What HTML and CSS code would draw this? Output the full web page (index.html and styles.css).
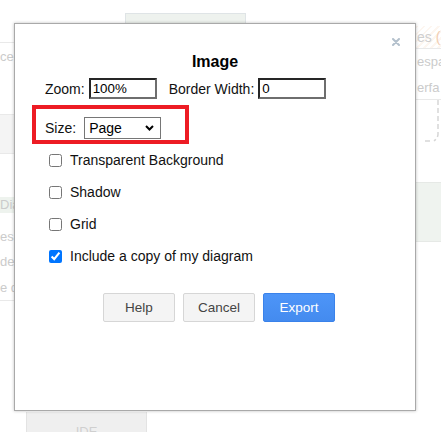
FILE: index.html
```html
<!DOCTYPE html>
<html>
<head>
<meta charset="utf-8">
<link rel="stylesheet" href="styles.css">
</head>
<body>
<div class="app">
  <div class="side left">
    <div class="blank h43 line-b"></div>
    <div class="t h28">ce</div>
    <div class="blank h43"></div>
    <div class="gray-band"></div>
    <div class="blank h43"></div>
    <div class="t green-band">Dia</div>
    <div class="blank h12"></div>
    <div class="t h24">es i</div>
    <div class="t h26">de</div>
    <div class="t h26 line-b">e d</div>
  </div>
  <div class="main">
    <div class="tab"></div>
    <div class="ide">IDE</div>
  </div>
  <div class="side right">
    <div class="blank h26"></div>
    <div class="hatch line-b">es <span class="or">(</span></div>
    <div class="r h26">espa</div>
    <div class="r h25 line-b">erfa</div>
    <div class="dash">
      <svg width="25" height="45" viewBox="0 0 25 45"><path d="M22 0 V34 Q22 38 18 41 M14 41 H8" fill="none" stroke="#d6d6d6" stroke-width="1.5" stroke-dasharray="5 3"/></svg>
    </div>
    <div class="blank h37"></div>
    <div class="green-block"></div>
  </div>
</div>

<div class="dialog">
  <button class="close" aria-label="Close">
    <svg width="8" height="8" viewBox="0 0 8 8"><path d="M1 1 L7 7 M7 1 L1 7" stroke="#b3c0cc" stroke-width="2" stroke-linecap="round"/></svg>
  </button>
  <h2 class="title">Image</h2>
  <div class="zoom-row">
    <label class="lbl">Zoom:</label>
    <input class="txt" type="text" value="100%">
    <label class="lbl bw">Border Width:</label>
    <input class="txt bw-input" type="text" value="0">
  </div>
  <div class="size-box">
    <label class="lbl">Size:</label>
    <div class="select-wrap">
      <select class="sel"><option>Page</option><option>Selection Only</option></select>
      <svg class="chev" width="9" height="6" viewBox="0 0 9 6"><path d="M1 1 L4.5 4.5 L8 1" fill="none" stroke="#000" stroke-width="2"/></svg>
    </div>
  </div>
  <label class="check"><input type="checkbox" class="cb"><span>Transparent Background</span></label>
  <label class="check"><input type="checkbox" class="cb"><span>Shadow</span></label>
  <label class="check"><input type="checkbox" class="cb"><span>Grid</span></label>
  <label class="check"><input type="checkbox" class="cb" checked><span>Include a copy of my diagram</span></label>
  <div class="buttons">
    <button class="btn">Help</button>
    <button class="btn">Cancel</button>
    <button class="btn primary">Export</button>
  </div>
</div>
</body>
</html>
```

FILE: styles.css
```css
* { box-sizing: border-box; }
html, body { margin: 0; padding: 0; }
body {
  width: 441px;
  height: 432px;
  overflow: hidden;
  position: relative;
  background: #fff;
  font-family: "Liberation Sans", Arial, sans-serif;
}

/* faded background app */
.app { display: flex; height: 432px; }
.side { flex: none; display: flex; flex-direction: column; font-size: 13px; color: #cbcbcb; }
.left { width: 26px; }
.right { width: 25px; }
.main { flex: 1; display: flex; flex-direction: column; justify-content: space-between; }
.blank { flex: none; }
.h12 { height: 12px; }
.h24 { height: 24px; line-height: 24px; }
.h25 { height: 25px; line-height: 25px; }
.h26 { height: 26px; line-height: 26px; }
.h28 { height: 28px; line-height: 28px; }
.h37 { height: 37px; }
.h43 { height: 43px; }
.line-b { border-bottom: 1px solid #e9e9e9; }
.t {
  white-space: nowrap;
  flex: none;
}
.gray-band {
  height: 40px;
  background: #f4f4f4;
  border-top: 1px solid #e9e9e9;
  border-bottom: 1px solid #e9e9e9;
  flex: none;
}
.green-band {
  height: 16px;
  line-height: 16px;
  background: #eef3ee;
}
.r {
  white-space: nowrap;
  padding-left: 1px;
  flex: none;
}
.hatch {
  height: 23px;
  line-height: 22px;
  white-space: nowrap;
  padding-left: 1px;
  color: #cfcfcf;
  font-size: 14px;
  background: repeating-linear-gradient(135deg, #fdf6f0 0 2px, #ffffff 2px 5px);
  flex: none;
}
.or { color: #f2cdb0; }
.dash { height: 45px; flex: none; }
.dash svg { display: block; }
.green-block {
  height: 60px;
  background: #eff3ef;
  border-top: 1px solid #e6e9e6;
  border-bottom: 1px solid #e6e9e6;
  flex: none;
}
.tab {
  margin: 13px 0 0 99px;
  width: 121px;
  height: 20px;
  background: #eef2ee;
  border: 1px solid #dfe4e6;
}
.ide {
  width: 121px;
  height: 20px;
  background: #efefef;
  border-left: 1px solid #e3e3e3;
  border-right: 1px solid #e3e3e3;
  padding-top: 12px;
  line-height: 16px;
  font-size: 13px;
  color: #cfcfcf;
  text-align: center;
  overflow: hidden;
}

/* dialog */
.dialog {
  position: absolute;
  left: 14px;
  top: 23px;
  width: 402px;
  height: 388px;
  background: #fff;
  border: 1px solid #a9a9a9;
  box-shadow: 0 0 3px rgba(0, 0, 0, 0.25);
  padding-top: 28px;
  color: #111;
}
.close {
  position: absolute;
  top: 14px;
  right: 15px;
  width: 8px;
  height: 8px;
  padding: 0;
  margin: 0;
  border: 0;
  background: none;
  display: block;
}
.close svg { display: block; }
.title {
  margin: 0;
  font-size: 16px;
  line-height: 19px;
  font-weight: bold;
  text-align: center;
  color: #000;
}
.zoom-row {
  margin-top: 7px;
  padding-left: 30px;
  display: flex;
  align-items: center;
  height: 21px;
}
.lbl { font-size: 14px; color: #111; }
.txt {
  width: 68px;
  height: 21px;
  margin: 0 0 0 4px;
  padding: 0 2px;
  border: 2px solid;
  border-color: #262626 #6e6e6e #6e6e6e #262626;
  font-family: "Liberation Sans", Arial, sans-serif;
  font-size: 13.33px;
  color: #000;
  outline: none;
}
.bw { margin-left: 12px; }
.bw-input { margin-left: 4px; }
.size-box {
  margin: 6px 0 0 17px;
  width: 157px;
  height: 39px;
  border: 4px solid #ed1c24;
  padding: 6px 0 0 9px;
  display: flex;
  align-items: center;
  align-self: flex-start;
}
.size-box .lbl { height: 22px; line-height: 22px; }
.select-wrap {
  position: relative;
  margin-left: 8px;
  width: 77px;
  height: 22px;
}
.sel {
  appearance: none;
  -webkit-appearance: none;
  width: 77px;
  height: 22px;
  margin: 0;
  padding: 0 0 0 4px;
  border: 1px solid #767676;
  border-radius: 0;
  background: #fff;
  font-family: "Liberation Sans", Arial, sans-serif;
  font-size: 14px;
  color: #000;
  outline: none;
}
.chev {
  position: absolute;
  right: 7px;
  top: 8px;
  pointer-events: none;
}
.check {
  display: flex;
  align-items: center;
  height: 32px;
  padding-left: 34px;
  font-size: 14px;
  color: #111;
}
.cb {
  width: 13px;
  height: 13px;
  margin: 0 8px 0 0;
  flex: none;
}
.buttons {
  display: flex;
  justify-content: center;
  gap: 8px;
  margin-top: 21px;
  padding-left: 8px;
}
.btn {
  width: 72px;
  height: 29px;
  margin: 0;
  padding: 0;
  background: #f4f4f4;
  border: 1px solid #d6d6d6;
  border-radius: 2px;
  color: #444;
  font-family: "Liberation Sans", Arial, sans-serif;
  font-size: 13.5px;
}
.btn.primary {
  background: linear-gradient(#4d95f8, #448bef);
  border-color: #3a82ea;
  color: #fff;
}
```
